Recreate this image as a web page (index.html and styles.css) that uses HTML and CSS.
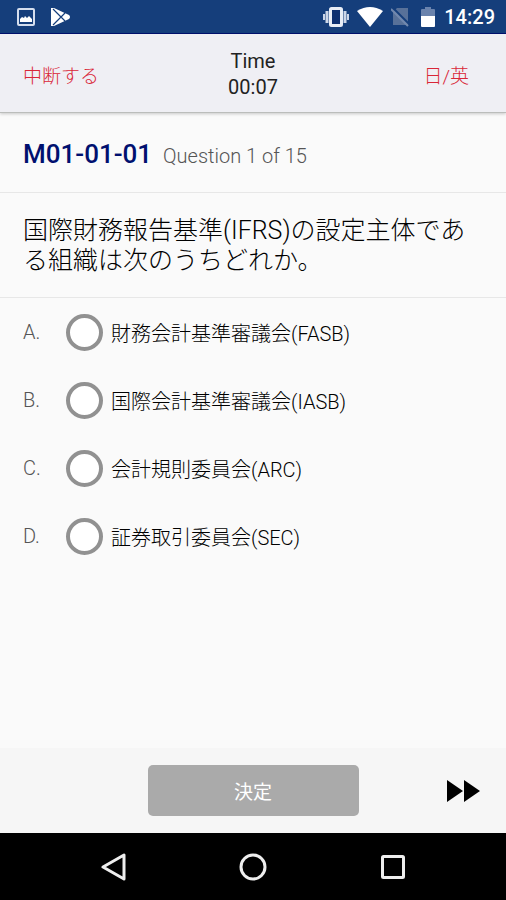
FILE: index.html
```html
<!DOCTYPE html>
<html lang="ja">
<head>
<meta charset="utf-8">
<meta name="viewport" content="width=device-width, initial-scale=1">
<title>M01-01-01</title>
<link rel="stylesheet" href="styles.css">
</head>
<body>
<div class="status">
  <div class="status-group status-left">
    <svg width="18" height="18" viewBox="0 0 18 18" aria-hidden="true"><rect x="1" y="1" width="16" height="16" rx="1" fill="none" stroke="#d5deee" stroke-width="2"/><path d="M3 14V11L5 9L7 10L8 8L10 10L12 8L15 11V14Z" fill="#fff"/></svg>
    <svg width="20" height="20" viewBox="0 0 20 20" aria-hidden="true"><path d="M1 1L4 1L19 8Q21 10 19 12L4 19L1 19Z" fill="#fff"/><path d="M3 2L15 14M3 18L15 6" stroke="#153e7b" stroke-width="1.2" fill="none"/></svg>
  </div>
  <div class="status-group status-right">
    <svg width="26" height="20" viewBox="0 0 26 20" aria-hidden="true"><path d="M1 7V13M25 7V13" stroke="#ccd6e8" stroke-width="2"/><path d="M4 4V16M22 4V16" stroke="#ccd6e8" stroke-width="3"/><rect x="7.5" y="1.5" width="11" height="17" rx="1" fill="#0c2f70" stroke="#e8edf6" stroke-width="3"/></svg>
    <svg width="26" height="20" viewBox="0 0 26 20" aria-hidden="true"><path d="M0 4Q13-4 26 4L13 20Z" fill="#fff"/></svg>
    <svg width="18" height="20" viewBox="0 0 18 20" aria-hidden="true"><path d="M6 1H17V18H2V5Z" fill="#587199"/><path d="M1 0L18 17" stroke="#153e7b" stroke-width="2"/><path d="M0 2L17 19" stroke="#7188ae" stroke-width="2"/></svg>
    <svg width="14" height="20" viewBox="0 0 14 20" aria-hidden="true"><path d="M0 9V3Q0 2 1 2H4V0H10V2H13Q14 2 14 3V9Z" fill="#6a83ad"/><path d="M0 9H14V19Q14 20 13 20H1Q0 20 0 19Z" fill="#fff"/></svg>
    <span class="clock">14:29</span>
  </div>
</div>
<header class="topbar">
  <button class="link-button" type="button">中断する</button>
  <div class="timer"><span>Time</span><span>00:07</span></div>
  <button class="link-button link-right" type="button">日/英</button>
</header>
<main class="content">
  <div class="title-row">
    <h1 class="code">M01-01-01</h1>
    <span class="progress">Question 1 of 15</span>
  </div>
  <p class="question" id="question">国際財務報告基準(IFRS)の設定主体である組織は次のうちどれか。</p>
  <div class="choices" role="radiogroup" aria-labelledby="question">
    <label class="choice"><span class="letter">A.</span><input type="radio" name="answer"><span>財務会計基準審議会(FASB)</span></label>
    <label class="choice"><span class="letter">B.</span><input type="radio" name="answer"><span>国際会計基準審議会(IASB)</span></label>
    <label class="choice"><span class="letter">C.</span><input type="radio" name="answer"><span>会計規則委員会(ARC)</span></label>
    <label class="choice"><span class="letter">D.</span><input type="radio" name="answer"><span>証券取引委員会(SEC)</span></label>
  </div>
</main>
<footer class="actions">
  <button class="submit" type="button">決定</button>
  <button class="skip" type="button" aria-label="次へ"><svg width="34" height="22" viewBox="0 0 34 22" aria-hidden="true"><path d="M1 0L17 11L1 22ZM18 0L34 11L18 22Z" fill="#000"/></svg></button>
</footer>
<nav class="navbar">
  <button type="button" aria-label="戻る"><svg width="28" height="28" viewBox="0 0 28 28" aria-hidden="true"><path d="M25 2V26L4 14Z" fill="none" stroke="#eee" stroke-width="3" stroke-linejoin="round"/></svg></button>
  <button type="button" aria-label="ホーム"><svg width="28" height="28" viewBox="0 0 28 28" aria-hidden="true"><circle cx="14" cy="14" r="12" fill="none" stroke="#eee" stroke-width="3"/></svg></button>
  <button type="button" aria-label="アプリ一覧"><svg width="28" height="28" viewBox="0 0 28 28" aria-hidden="true"><rect x="3.5" y="3.5" width="21" height="21" rx="1" fill="none" stroke="#eee" stroke-width="3"/></svg></button>
</nav>
</body>
</html>
```
FILE: styles.css
```css
* {
  box-sizing: border-box;
}

body {
  margin: 0;
  min-height: 100vh;
  display: flex;
  flex-direction: column;
  background: #fafafa;
  color: #000;
  font-family: Roboto, "Noto Sans CJK JP", sans-serif;
  font-size: 20px;
  font-weight: 300;
}

button {
  margin: 0;
  padding: 0;
  border: 0;
  background: none;
  font: inherit;
  cursor: pointer;
}

svg {
  display: block;
}

.status {
  display: flex;
  justify-content: space-between;
  padding: 0 11px 0 17px;
  height: 34px;
  background: #153e7b;
  border-bottom: 1px solid #00106f;
  color: #fff;
}

.status-group {
  display: flex;
  align-items: center;
}

.status-left {
  gap: 15px;
}

.status-right {
  gap: 8px;
}

.status-right svg:nth-of-type(4) {
  margin-left: 4px;
}

.clock {
  padding-left: 1px;
  font-weight: 500;
}

.topbar {
  display: grid;
  grid-template-columns: 1fr auto 1fr;
  align-items: center;
  padding: 14px 23px 12px;
  background: #efeff4;
  border-bottom: 1px solid #bbbdbb;
  box-shadow: 0 1px 3px rgba(0, 0, 0, 0.2);
}

.link-button {
  justify-self: start;
  color: #d92637;
  font-size: 19px;
}

.link-right {
  justify-self: end;
  padding-right: 14px;
}

.timer {
  display: flex;
  flex-direction: column;
  align-items: center;
  line-height: 26px;
  color: #222;
  font-weight: 400;
}

.content {
  flex: 1;
}

.title-row {
  display: flex;
  align-items: baseline;
  gap: 11px;
  padding: 25px 23px 20px;
  border-bottom: 1px solid #e7e7e7;
  line-height: 32px;
}

.code {
  margin: 0;
  color: #00106f;
  font-size: 26px;
  font-weight: 500;
}

.progress {
  color: #555;
}

.question {
  margin: 0;
  padding: 23px 23px 21px;
  border-bottom: 1px solid #e7e7e7;
  font-size: 25px;
  line-height: 30px;
}

.choices {
  padding: 0 23px;
}

.choice {
  display: flex;
  align-items: center;
  height: 68px;
}

.letter {
  width: 43px;
  color: #555;
}

.choice input {
  appearance: none;
  flex: none;
  width: 37px;
  height: 37px;
  margin: 0 8px 0 0;
  border: 4px solid #919191;
  border-radius: 50%;
  background: #fff;
}

.choice input:checked {
  box-shadow: inset 0 0 0 6px #fff;
  background: #00106f;
}

.actions {
  display: grid;
  grid-template-columns: 1fr 211px 1fr;
  align-items: center;
  padding: 17px 26px;
  background: #f6f6f6;
}

.submit {
  grid-column: 2;
  height: 51px;
  border-radius: 5px;
  background: #aaa;
  color: #fff;
  font-size: 19px;
  font-weight: 400;
}

.skip {
  justify-self: end;
}

.navbar {
  display: flex;
  justify-content: center;
  gap: 112px;
  padding: 20px 0 19px;
  background: #000;
}
```
